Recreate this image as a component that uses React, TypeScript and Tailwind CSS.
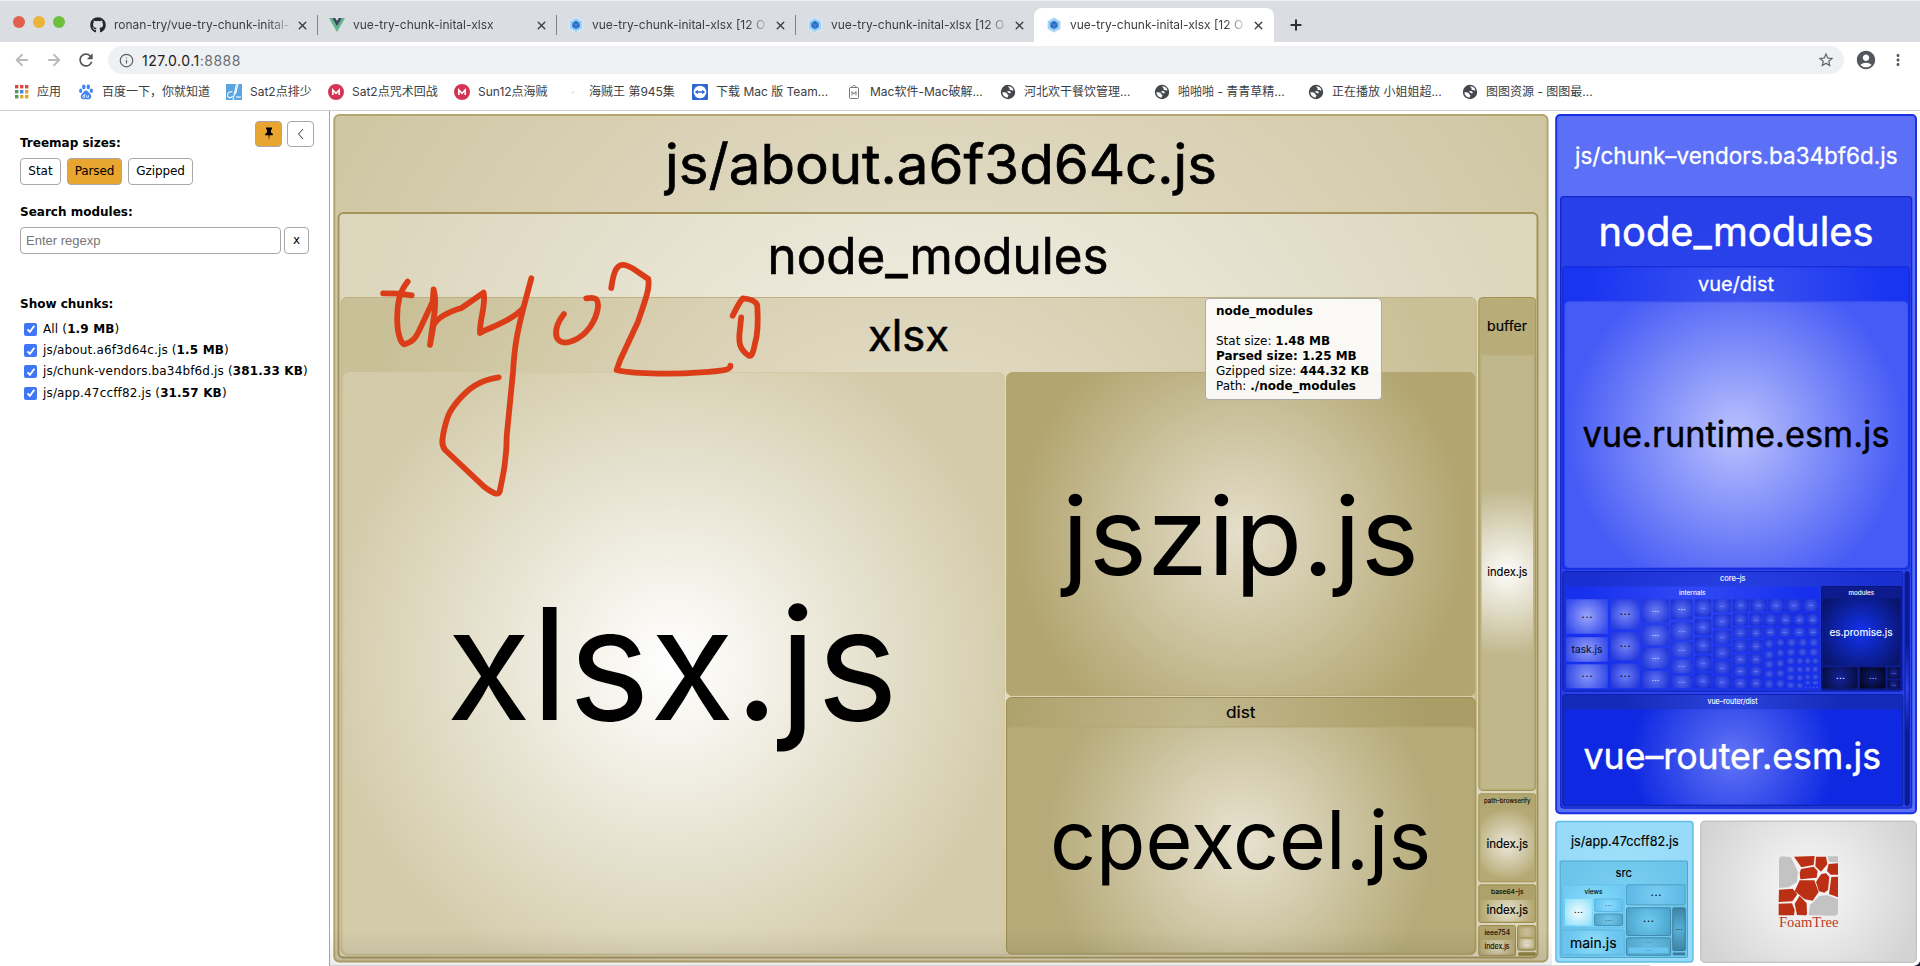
import React from "react";
import { ArrowLeft, ArrowRight, Info, Plus, X } from "lucide-react";
import { FaGithub } from "react-icons/fa";
import { MdAccountCircle, MdMoreVert, MdRefresh, MdStarBorder } from "react-icons/md";

/* ---------- browser chrome ---------- */

function VueLogo() {
  return (
    <svg viewBox="0 0 16 14" className="h-3.5 w-4 shrink-0">
      <path d="M0 0h3.2L8 8.2 12.8 0H16L8 14z" fill="#5fb588" />
      <path d="M3.2 0h3L8 3.1 9.8 0h3L8 8.2z" fill="#35495e" />
    </svg>
  );
}

function WebpackLogo() {
  return (
    <svg viewBox="0 0 16 16" className="h-4 w-4 shrink-0">
      <path d="M8 .4l6.6 3.8v7.6L8 15.6l-6.6-3.8V4.200z" fill="#9fd2f5" stroke="#e6f3fc" strokeWidth=".8" />
      <path d="M8 3.800l3.700 2.100v4.200L8 12.200l-3.700-2.100V5.900z" fill="#2f6cc4" />
      <path d="M4.300 5.900L8 8l3.700-2.100M8 8v4.200" stroke="#6ea6e2" strokeWidth=".5" fill="none" />
    </svg>
  );
}

function Tab({ icon, title, active, separator }: { icon: React.ReactNode; title: string; active?: boolean; separator?: boolean }) {
  return (
    <div className={active ? "flex h-[34px] w-[240px] items-center rounded-t-lg bg-white pl-3 pr-2.5" : "flex h-[34px] w-[239px] items-center pl-3 pr-0"}>
      {icon}
      <div className="ml-2 w-[176px] shrink-0 whitespace-nowrap text-xs text-[#3c4043] [mask-image:linear-gradient(to_right,black_88%,transparent_102%)]">{title}</div>
      <X className="ml-[6px] h-[13px] w-[13px] shrink-0 text-[#3c4043]" strokeWidth={2.6} />
      {separator && <div className="ml-2 h-5 w-px shrink-0 bg-[#808489]" />}
    </div>
  );
}

function AppsIcon() {
  const c = ["#d24a3c", "#d24a3c", "#d24a3c", "#4d9a5b", "#4a7fe6", "#e0a62f", "#4d9a5b", "#e0a62f", "#e0a62f"];
  return (
    <svg viewBox="0 0 14 14" className="h-[14px] w-[14px] shrink-0">
      {c.map((f, i) => (
        <rect key={i} x={(i % 3) * 5} y={Math.floor(i / 3) * 5} width="3.400" height="3.400" fill={f} />
      ))}
    </svg>
  );
}

function BaiduIcon() {
  return (
    <svg viewBox="0 0 16 16" className="h-4 w-4 shrink-0" fill="#4285f4">
      <ellipse cx="5.800" cy="3" rx="1.700" ry="2.400" />
      <ellipse cx="10.300" cy="3" rx="1.700" ry="2.400" />
      <ellipse cx="2.700" cy="6.800" rx="1.600" ry="2.200" />
      <ellipse cx="13.300" cy="6.800" rx="1.600" ry="2.200" />
      <path d="M8 6.500c2 0 2.500 2 4 3.300 2 1.700 1.500 5.400-1 5.400H5c-2.500 0-3-3.700-1-5.400C5.500 8.500 6 6.500 8 6.500z" />
      <path d="M6.800 10v3.400H5.600a1 1 0 010-2h1.200M8.700 11.400v1.500c0 .4.300.5.600.5h1.200v-2" fill="none" stroke="#fff" strokeWidth=".8" />
    </svg>
  );
}

function SatIcon() {
  return (
    <svg viewBox="0 0 16 16" className="h-4 w-4 shrink-0">
      <rect width="16" height="16" fill="#5aa4e0" />
      <path d="M10.500 0L7 16M6.500 8c-3-1-5 1-5 3.500S5 14.500 6.800 12M12 0l-2.500 10" stroke="#fff" strokeWidth="1.100" fill="none" />
      <path d="M10 13h5" stroke="#cfe6f8" strokeWidth="1.500" />
    </svg>
  );
}

function MIcon() {
  return (
    <svg viewBox="0 0 16 16" className="h-4 w-4 shrink-0">
      <circle cx="8" cy="8" r="8" fill="#d43555" />
      <path d="M4.800 11V6L8 9.300 11.200 6v5" stroke="#fff" strokeWidth="1.600" fill="none" />
    </svg>
  );
}

function SpeckIcon() {
  return (
    <svg viewBox="0 0 16 16" className="h-4 w-4 shrink-0">
      <path d="M7.500 9.500l1-2" stroke="#dfb0d8" strokeWidth="1" />
    </svg>
  );
}

function TeamViewerIcon() {
  return (
    <svg viewBox="0 0 16 16" className="h-4 w-4 shrink-0">
      <rect width="16" height="16" rx="1" fill="#2f66d4" />
      <circle cx="8" cy="8" r="6.300" fill="#fff" />
      <path d="M2.800 8l3-2.300v1.500h4.400V5.700l3 2.300-3 2.300V8.800H5.800v1.500z" fill="#2f66d4" />
    </svg>
  );
}

function MacBagIcon() {
  return (
    <svg viewBox="0 0 16 16" className="h-4 w-4 shrink-0" fill="none" stroke="#777">
      <rect x="3.500" y="3.500" width="9" height="11" rx="1" />
      <path d="M6 3.500C6 .8 10 .8 10 3.500" />
      <path d="M6 11.500V7.500l2 2.500 2-2.500v4" />
    </svg>
  );
}

function GlobeIcon() {
  return (
    <svg viewBox="0 0 16 16" className="h-4 w-4 shrink-0">
      <circle cx="8" cy="8" r="7.200" fill="#44474b" />
      <path d="M8.300 2.300c2.400 0 4.600 1.600 5.200 4-.8.700-1.700.1-2.200-.6-.5.600-1.300.5-1.600 0-.5-.9.300-1.300-.4-1.900-.5-.4-1.300-.7-1-1.500z" fill="#fff" />
      <path d="M2.300 8.600c1.400-.5 2.700-.5 4 .2 1 .6.600 1.500 1.500 1.900.9.300.7 1.200.2 1.800-.3.400-.3.900-.8 1.200C4.700 13.300 2.600 11.300 2.300 8.600zM7.500 7.300c1-.6 2.300-.3 3 .5.500.7.200 1.500-.6 1.600-.9 0-1-.7-1.700-.8-.7-.2-1.300-.8-.7-1.300z" fill="#fff" />
    </svg>
  );
}

const bookmarks: { w: string; label: string; icon: React.ReactNode }[] = [
  { w: "w-[63px]", label: "应用", icon: <AppsIcon /> },
  { w: "w-[148px]", label: "百度一下，你就知道", icon: <BaiduIcon /> },
  { w: "w-[102px]", label: "Sat2点排少", icon: <SatIcon /> },
  { w: "w-[126px]", label: "Sat2点咒术回战", icon: <MIcon /> },
  { w: "w-[111px]", label: "Sun12点海贼", icon: <MIcon /> },
  { w: "w-[127px]", label: "海贼王 第945集", icon: <SpeckIcon /> },
  { w: "w-[154px]", label: "下载 Mac 版 Team...", icon: <TeamViewerIcon /> },
  { w: "w-[154px]", label: "Mac软件-Mac破解...", icon: <MacBagIcon /> },
  { w: "w-[154px]", label: "河北欢干餐饮管理...", icon: <GlobeIcon /> },
  { w: "w-[154px]", label: "啪啪啪 - 青青草精...", icon: <GlobeIcon /> },
  { w: "w-[154px]", label: "正在播放 小姐姐超...", icon: <GlobeIcon /> },
  { w: "w-[154px]", label: "图图资源 - 图图最...", icon: <GlobeIcon /> },
];

function BrowserChrome() {
  return (
    <header className="h-[111px] shrink-0 border-b border-[#cfd0d4] bg-white font-['Inter','Noto_Sans_CJK_SC',sans-serif]">
      <div className="flex h-[42px] items-end border-t border-[#eef1f2] bg-[#dadde2]">
        <div className="flex h-[41px] w-[78px] items-center gap-2 pl-[13px]">
          <span className="h-3 w-3 rounded-full bg-[#e0604e]" />
          <span className="h-3 w-3 rounded-full bg-[#edb336]" />
          <span className="h-3 w-3 rounded-full bg-[#6cc03e]" />
        </div>
        <Tab icon={<FaGithub className="h-4 w-4 shrink-0 text-[#24292e]" />} title="ronan-try/vue-try-chunk-inital-" separator />
        <Tab icon={<VueLogo />} title="vue-try-chunk-inital-xlsx" separator />
        <Tab icon={<WebpackLogo />} title="vue-try-chunk-inital-xlsx [12 O" separator />
        <Tab icon={<WebpackLogo />} title="vue-try-chunk-inital-xlsx [12 O" />
        <Tab icon={<WebpackLogo />} title="vue-try-chunk-inital-xlsx [12 O" active />
        <div className="flex h-[34px] items-center pl-3.5">
          <Plus className="h-4 w-4 text-[#2e3033]" strokeWidth={3} />
        </div>
      </div>
      <div className="flex h-9 items-center pl-[13px] pr-[13px]">
        <ArrowLeft className="h-[18px] w-[18px] text-[#b9bbbe]" strokeWidth={2.400} />
        <ArrowRight className="ml-3.5 h-[18px] w-[18px] text-[#b9bbbe]" strokeWidth={2.400} />
        <MdRefresh className="ml-[13px] h-5 w-5 text-[#515459]" />
        <div className="ml-3 flex h-7 flex-1 items-center rounded-full bg-[#eff0f2] pl-[11px] pr-[9px]">
          <Info className="h-[15px] w-[15px] text-[#5f6368]" />
          <span className="ml-2 text-[14px] tracking-[0.5px] text-[#202124]">
            127.0.0.1<span className="text-[#6a6e73]">:8888</span>
          </span>
          <MdStarBorder className="ml-auto h-[18px] w-[18px] text-[#5f6368]" />
        </div>
        <MdAccountCircle className="ml-[11px] h-[22px] w-[22px] text-[#53575c]" />
        <MdMoreVert className="ml-3 h-[18px] w-[18px] text-[#53575c]" />
      </div>
      <div className="flex h-[27px] items-center pl-[15px]">
        {bookmarks.map((b, i) => (
          <div key={i} className={b.w + " flex shrink-0 items-center gap-2 whitespace-nowrap text-xs text-[#3c4043]"}>
            {b.icon}
            <span>{b.label}</span>
          </div>
        ))}
      </div>
    </header>
  );
}

/* ---------- sidebar ---------- */

function Check({ label, size }: { label: string; size: string }) {
  return (
    <div className="flex h-[21.4px] items-center pl-1 whitespace-nowrap tracking-[0.15px]">
      <span className="flex h-[13px] w-[13px] shrink-0 items-center justify-center rounded-[2px] bg-[#3f76f6]">
        <svg viewBox="0 0 12 12" className="h-3 w-3">
          <path d="M2.500 6.300l2.400 2.500 4.500-6" fill="none" stroke="#fff" strokeWidth="1.900" />
        </svg>
      </span>
      <span className="ml-1.5">
        {label} (<b>{size}</b>)
      </span>
    </div>
  );
}

const btn = "flex items-center justify-center rounded-[4px] border border-[#a8a8a8]";

function Sidebar() {
  return (
    <aside className="h-[855px] w-[330px] shrink-0 border-r border-[#a3a3a3] bg-white pl-5 pr-[15px] pt-2.5 text-[12px] leading-[15px] text-black font-['DejaVu_Sans',sans-serif]">
      <div className="flex h-[26px] justify-end gap-[5px]">
        <div className={btn + " h-[26px] w-[27px] bg-[#e8a52f]"}>
          <svg viewBox="0 0 10 14" className="h-3.5 w-2.5">
            <path d="M2 .5h6v1.600L7 3v2.500l1.800 1.300v1.400H5.500L5 13.500l-.5-5.300H1.200V6.800L3 5.500V3l-1-.9z" />
          </svg>
        </div>
        <div className={btn + " h-[26px] w-[27px] bg-white"}>
          <svg viewBox="0 0 8 12" className="h-3 w-2" fill="none" stroke="#222" strokeWidth=".9">
            <path d="M6 1L1.500 6 6 11" />
          </svg>
        </div>
      </div>
      <h2 className="-mt-[11px] font-bold">Treemap sizes:</h2>
      <div className="mt-[7px] flex gap-1.5">
        <div className={btn + " h-[27px] w-[41px]"}>Stat</div>
        <div className={btn + " h-[27px] w-[55px] bg-[#e8a52f] tracking-[-0.1px]"}>Parsed</div>
        <div className={btn + " h-[27px] w-[65px] tracking-[-0.1px]"}>Gzipped</div>
      </div>
      <h2 className="mt-5 font-bold">Search modules:</h2>
      <div className="mt-[7px] flex gap-[3px]">
        <div className="flex h-[27px] w-[261px] items-center rounded-[4px] border border-[#a8a8a8] pl-[5px] text-[13px] text-[#757575] font-['Liberation_Sans',sans-serif]">Enter regexp</div>
        <div className={btn + " h-[27px] w-[25px]"}>x</div>
      </div>
      <h2 className="mt-[43px] font-bold">Show chunks:</h2>
      <div className="mt-[6.5px]">
        <Check label="All" size="1.9 MB" />
        <Check label="js/about.a6f3d64c.js" size="1.5 MB" />
        <Check label="js/chunk-vendors.ba34bf6d.js" size="381.33 KB" />
        <Check label="js/app.47ccff82.js" size="31.57 KB" />
      </div>
    </aside>
  );
}

/* ---------- treemap chart ---------- */

/* Edges of a cell, its fill (rim colour, optional core colour) and outline. */
interface CellProps {
  l: number;
  t: number;
  r: number;
  b: number;
  rim: string;
  core?: string;
  line?: string;
  lw?: number;
  rx?: number;
  gx?: number;
  gy?: number;
  gr?: number;
}

let gradientCount = 0;

function Cell({ l, t, r, b, rim, core, line, lw = 1, rx = 3, gx, gy, gr }: CellProps) {
  const id = React.useMemo(() => "g" + gradientCount++, []);
  const w = r - l;
  const h = b - t;
  return (
    <g>
      {core && (
        <radialGradient id={id} gradientUnits="userSpaceOnUse" cx={gx ?? l + w / 2} cy={gy ?? t + h / 2} r={gr ?? Math.hypot(w, h) * 0.4}>
          <stop offset="0" stopColor={core} />
          <stop offset="1" stopColor={rim} />
        </radialGradient>
      )}
      <rect x={l + lw / 2} y={t + lw / 2} width={w - lw} height={h - lw} rx={rx} fill={core ? `url(#${id})` : rim} stroke={line ?? "none"} strokeWidth={lw} />
    </g>
  );
}

/* Smaller labels get a hairline outline so that they keep their weight. */
function Label({ x1, x2, y, s, c = "#000", children }: { x1: number; x2: number; y: number; s: number; c?: string; children: string }) {
  return (
    <text x={x1} y={y} fontSize={s} fill={c} stroke={c} strokeWidth={s < 60 ? s * 0.013 : 0} textLength={x2 - x1} lengthAdjust="spacingAndGlyphs">
      {children}
    </text>
  );
}

function Dots({ x, y, s = 1, c = "#111" }: { x: number; y: number; s?: number; c?: string }) {
  return (
    <text x={x} y={y + 1} fontSize={s * 10} fontWeight={600} fill={c} textAnchor="middle" textLength={s * 11} lengthAdjust="spacing">
      ...
    </text>
  );
}

/* Small internals modules: left, right, then a list of top/bottom pairs, in thirds of a pixel. */
const columns: [number, number, [number, number][]][] = [
  [62, 190, [[116, 223], [230, 307], [311, 386]]],
  [195, 286, [[116, 210], [215, 303], [309, 386]]],
  [290, 373, [[116, 189], [194, 258], [262, 327], [331, 386]]],
  [376, 445, [[116, 180], [185, 240], [244, 293], [297, 341], [345, 386]]],
  [448, 500, [[116, 171], [176, 227], [231, 281], [286, 334], [338, 386]]],
  [503, 559, [[116, 158], [162, 206], [210, 253], [257, 299], [303, 342], [346, 386]]],
  [562, 610, [[159, 198], [201, 236], [240, 277], [281, 315], [318, 350], [353, 386]]],
  [613, 653, [[159, 198], [201, 236], [240, 277], [281, 315], [318, 350], [353, 386]]],
  [656, 689, [[235, 268], [271, 297], [300, 326], [329, 355], [358, 386]]],
  [692, 720, [[234, 262], [265, 292], [296, 324], [327, 353], [356, 386]]],
  [723, 751, [[291, 314], [317, 340], [343, 362], [365, 386]]],
  [753, 776, [[291, 314], [317, 340], [343, 364], [367, 386]]],
  [778, 798, [[291, 314], [317, 339], [342, 360], [362, 374]]],
  [800, 822, [[291, 314], [317, 339], [342, 360], [362, 374]]],
  [778, 787, [[377, 386]]],
  [789, 798, [[377, 386]]],
  [800, 810, [[377, 386]]],
  [812, 822, [[377, 386]]],
];
const rows: [number, number, [number, number][]][] = [
  [116, 156, [[562, 613], [615, 666], [668, 719], [722, 771], [773, 822]]],
  [159, 198, [[656, 698], [701, 742], [744, 783], [785, 822]]],
  [201, 231, [[656, 696], [699, 740], [742, 784], [786, 822]]],
  [234, 261, [[723, 756], [759, 788], [791, 822]]],
  [264, 289, [[723, 754], [757, 788], [790, 822]]],
];
const modules = [
  ...columns.flatMap(([l, r, list]) => list.map(([t, b]) => [l, t, r, b])),
  ...rows.flatMap(([t, b, list]) => list.map(([l, r]) => [l, t, r, b])),
].map((q) => [1545 + q[0] / 3, 560 + q[1] / 3, 1545 + q[2] / 3, 560 + q[3] / 3]);

function mix(a: number[], b: number[], k: number) {
  return "rgb(" + a.map((v, i) => Math.round(v + (b[i] - v) * k)).join(",") + ")";
}

function Internals() {
  return (
    <g>
      {modules.map(([l, t, r, b], i) => {
        const k = Math.sqrt(Math.min(1, Math.max(0, (l - 1565 + (b - 598) * 0.4) / 170)));
        const small = r - l < 12;
        const isTask = i === 1;
        return (
          <g key={i}>
            <Cell l={l} t={t} r={r} b={b} rx={1} rim={mix([66, 88, 250], [22, 42, 205], k)} core={mix([190, 197, 255], [72, 94, 240], k)} gr={Math.max(r - l, b - t) * 0.55} />
            {isTask && <Label x1={1571.500} x2={1602.500} y={652.700} s={10} c="#0a1040">task.js</Label>}
            {!small && !isTask && <Dots x={(l + r) / 2} y={(t + b) / 2} s={i < 6 ? 1 : i < 15 ? 0.7 : 0.45} c={i < 6 ? "#0a1040" : i < 11 ? "#dfe4ff" : "#9fabf8"} />}
          </g>
        );
      })}
    </g>
  );
}

function AboutChunk() {
  return (
    <g>
      <Cell l={333.300} t={114} r={1548.500} b={962.500} rx={5} lw={2} rim="#cfc6a3" core="#ebe7d8" line="#b3a56c" gx={941} gy={500} gr={700} />
      <Label x1={665} x2={1217} y={184.300} s={55.500}>js/about.a6f3d64c.js</Label>
      <Cell l={337.500} t={212} r={1538.500} b={958.500} rx={5} lw={2} rim="#dcd6bd" core="#f7f5ee" line="#a5935a" gx={937} gy={520} gr={620} />
      <Label x1={767.500} x2={1108.500} y={274.300} s={51}>node_modules</Label>
      <Cell l={340.500} t={297} r={1476.700} b={955.500} rx={6} rim="#cac098" core="#ebe6d6" line="#bdb182" gx={908} gy={560} gr={560} />
      <Label x1={868} x2={949} y={351} s={43.500}>xlsx</Label>
      <Cell l={342.500} t={372} r={1005} b={954} rx={6} rim="#d3cbaa" core="#ffffff" line="#d3caa6" gx={672} gy={663} gr={345} />
      <Label x1={446.500} x2={898} y={720} s={155}>xlsx.js</Label>
      <Cell l={1006} t={372} r={1475.500} b={696.300} rx={6} rim="#b2a570" core="#e5dfcb" line="#b3a672" gx={1241} gy={534} gr={225} />
      <Label x1={1062} x2={1419} y={575} s={108}>jszip.js</Label>
      <path d="M1006 696.600H1475" stroke="#ded8bf" strokeWidth=".8" />
      <Cell l={1006} t={697} r={1475.700} b={954.500} rx={5} rim="#aa9d66" core="#c2b88e" line="#9d8f53" gx={1200} gy={725} gr={230} />
      <Label x1={1226} x2={1255.500} y={717.900} s={16}>dist</Label>
      <Cell l={1007} t={726.500} r={1474.700} b={953.500} rx={4} rim="#b5aa78" core="#e8e3d1" line="#b3a774" gx={1241} gy={840} gr={195} />
      <Label x1={1050} x2={1431} y={868.700} s={81}>cpexcel.js</Label>

      <Cell l={1478.300} t={297} r={1536.200} b={791} rx={4} rim="#b8ac79" line="#a39453" />
      <Label x1={1487} x2={1527} y={331.300} s={13}>buffer</Label>
      <Cell l={1480.500} t={354.500} r={1534.200} b={789.500} rx={2} rim="#c0b78c" core="#fdfcfa" line="#bbb080" gx={1507} gy={572} gr={84} />
      <Label x1={1487.300} x2={1527.500} y={576} s={12}>index.js</Label>

      <Cell l={1478.300} t={793.300} r={1536.200} b={882.300} rx={2} rim="#b3a771" line="#a39453" />
      <Label x1={1484} x2={1530.500} y={803} s={6.800}>path–browserify</Label>
      <Cell l={1480} t={808} r={1534.500} b={881} rx={1} rim="#b5aa75" core="#ece8da" gr={36} />
      <Label x1={1486.500} x2={1528} y={847.500} s={12.500}>index.js</Label>

      <Cell l={1478.300} t={884.300} r={1536.200} b={923} rx={2} rim="#aea16a" line="#9c8e50" />
      <Label x1={1491} x2={1523.500} y={893.700} s={6.800}>base64–js</Label>
      <Cell l={1480} t={899.500} r={1534.500} b={922} rx={1} rim="#b5aa75" core="#e6e1ce" gr={26} />
      <Label x1={1486.500} x2={1528} y={913.500} s={12.500}>index.js</Label>

      <Cell l={1478.300} t={925} r={1516} b={956.300} rx={2} rim="#b0a36c" line="#9c8e50" />
      <Label x1={1484.500} x2={1510} y={935} s={7.200}>ieee754</Label>
      <Cell l={1480} t={939.500} r={1514.500} b={955} rx={1} rim="#b5aa75" core="#ddd7be" gr={17} />
      <Label x1={1484.500} x2={1509.500} y={949} s={7.500}>index.js</Label>

      <Cell l={1517} t={925} r={1536.200} b={950.700} rx={2} rim="#b0a36c" line="#9c8e50" />
      <Cell l={1519} t={927} r={1534.500} b={937.500} rx={1} rim="#b0a36c" core="#cfc7a4" gr={9} />
      <Cell l={1519} t={938.500} r={1534.500} b={949} rx={1} rim="#b8ad79" core="#f0ecdf" gr={9} />
      <Dots x={1526.700} y={932} s={0.4} c="#7a6f45" />
      <Dots x={1526.700} y={943} s={0.4} c="#7a6f45" />
      <Cell l={1518} t={952} r={1536.200} b={956.300} rx={1} rim="#8f8249" line="#a39453" />
    </g>
  );
}

function VendorsChunk() {
  return (
    <g>
      <Cell l={1555.200} t={114} r={1917} b={814.300} rx={4} lw={2} rim="#5b6ff7" line="#1930e2" />
      <Label x1={1575} x2={1897.500} y={164.300} s={22.500} c="#fff">js/chunk–vendors.ba34bf6d.js</Label>
      <Cell l={1560} t={196} r={1912.300} b={808.700} rx={3} lw={1.300} rim="#2740ea" core="#2f49f0" line="#1227c6" />
      <Label x1={1598.500} x2={1873.500} y={246} s={40.500} c="#fff">node_modules</Label>
      <Cell l={1562.300} t={266.300} r={1909.700} b={569.500} rx={3} rim="#1a35f2" core="#3e55ee" line="#1127d2" gx={1736} gy={310} gr={150} />
      <Label x1={1698} x2={1774} y={291} s={19.500} c="#fff">vue/dist</Label>
      <Cell l={1564.500} t={301.300} r={1908} b={568} rx={4} rim="#465bf5" core="#bbc2fd" line="#3f54ee" gx={1736} gy={434} gr={168} />
      <Label x1={1582.500} x2={1889.500} y={446.700} s={35.500}>vue.runtime.esm.js</Label>

      <Cell l={1562.300} t={571} r={1903.300} b={691.700} rx={2} rim="#1a2fd0" core="#2b43e6" line="#0d20b4" gr={150} />
      <Label x1={1720} x2={1745.500} y={581} s={7.600} c="#fff">core–js</Label>
      <Cell l={1564.500} t={586} r={1820.500} b={690} rx={1} rim="#1730ee" core="#3149f4" gx={1693} gy={592} gr={110} />
      <Label x1={1679} x2={1705.500} y={595} s={6.400} c="#fff">internals</Label>
      <Internals />
      <Cell l={1821} t={586} r={1901.700} b={690.500} rx={1} rim="#0e1b8c" line="#0a1676" />
      <Label x1={1848.500} x2={1874} y={595} s={6.400} c="#fff">modules</Label>
      <Cell l={1822} t={598} r={1900.500} b={665.700} rx={1} rim="#08156b" core="#1332ee" gr={46} />
      <Label x1={1829.500} x2={1892.500} y={635.700} s={10} c="#fff">es.promise.js</Label>
      <Cell l={1822} t={666.700} r={1858} b={689} rx={1} rim="#060d3e" core="#15239a" gr={19} />
      <Cell l={1859.300} t={666.700} r={1886} b={689} rx={1} rim="#03061f" core="#0e1a74" gr={15} />
      <Cell l={1887} t={666.700} r={1900.500} b={679} rx={1} rim="#060b38" core="#16249c" gr={8} />
      <Cell l={1887} t={680} r={1900.500} b={689} rx={1} rim="#060b38" core="#16249c" gr={7} />
      <Dots x={1840.500} y={677.500} s={0.8} c="#e8ebff" />
      <Dots x={1873} y={677.500} s={0.7} c="#b9c0ee" />
      <Dots x={1893.700} y={672.500} s={0.45} c="#8a94d8" />
      <Dots x={1893.700} y={684.500} s={0.45} c="#8a94d8" />

      <Cell l={1904.500} t={571} r={1909.700} b={806} rx={2} rim="#0b1c92" core="#2a45ee" line="#0b1b98" gr={45} />

      <Cell l={1562.300} t={694} r={1903.300} b={806.300} rx={2} rim="#152ab8" core="#2c44de" line="#0d20b0" gx={1732} gy={705} gr={110} />
      <Label x1={1707.500} x2={1757.500} y={704} s={7.500} c="#fff">vue–router/dist</Label>
      <Cell l={1564} t={708.700} r={1901.500} b={805} rx={2} rim="#0f29e2" core="#6275f5" gx={1733} gy={757} gr={102} />
      <Label x1={1583.500} x2={1881} y={769} s={36} c="#fff">vue–router.esm.js</Label>
    </g>
  );
}

function AppChunk() {
  return (
    <g>
      <Cell l={1555.200} t={820.700} r={1693.700} b={962.700} rx={3} lw={1.500} rim="#96daf8" core="#a3e2fb" line="#62bde4" />
      <Label x1={1571} x2={1678.700} y={846.300} s={13}>js/app.47ccff82.js</Label>
      <Cell l={1559.700} t={860.500} r={1688} b={958} rx={1} rim="#6bc4ea" core="#7fd3f4" line="#4fa6cb" />
      <Label x1={1615.500} x2={1632} y={877} s={11}>src</Label>
      <Cell l={1561.700} t={884.300} r={1624.700} b={928.300} rx={1} rim="#70cbf3" core="#8addfb" line="#66bfe8" />
      <Label x1={1584.500} x2={1602.500} y={894} s={6.800}>views</Label>
      <Cell l={1564.500} t={898.500} r={1592.300} b={926} rx={1} rim="#8edffb" core="#f2fcff" gr={18} />
      <Cell l={1594} t={898.500} r={1623} b={912} rx={1} rim="#62c2f0" core="#8bdcfa" line="#5bb8e4" gr={14} />
      <Cell l={1594} t={913.500} r={1623} b={926} rx={1} rim="#52a5c9" core="#72c8ec" line="#4796ba" gr={14} />
      <Cell l={1561.700} t={929.500} r={1624.700} b={955.300} rx={1} rim="#69c4ef" core="#8eddf9" line="#5bb4dc" gr={26} />
      <Label x1={1570} x2={1616.500} y={948} s={13.500}>main.js</Label>
      <Cell l={1626} t={884.300} r={1685.500} b={905.300} rx={1} rim="#5fbbe6" core="#79cdf1" line="#509fc3" gr={26} />
      <Cell l={1626} t={907.300} r={1671} b={936} rx={1} rim="#4aa3cb" core="#70cbf1" line="#408caf" gr={24} />
      <Cell l={1672.300} t={907.300} r={1685.700} b={951} rx={1} rim="#3f86a6" core="#58b2da" line="#39799a" gr={20} />
      <Cell l={1626} t={937.300} r={1671} b={955.700} rx={1} rim="#55a9cc" core="#66bde2" line="#3f89aa" />
      <Cell l={1628} t={947} r={1669} b={953.500} rx={1} rim="#6ac6f0" />
      <Cell l={1672.300} t={952} r={1685.700} b={955.700} rx={1} rim="#3c7c9b" />
      <Dots x={1578.500} y={911.500} s={0.8} />
      <Dots x={1608.500} y={905} s={0.6} c="#1d5670" />
      <Dots x={1608.500} y={919.500} s={0.6} c="#1d5670" />
      <Dots x={1656} y={894.500} />
      <Dots x={1648.500} y={921} />
      <Dots x={1679} y={928.500} s={0.6} />
      <Dots x={1648.500} y={942} s={0.5} c="#1d5670" />
      <Dots x={1648.500} y={950} s={0.5} c="#1d5670" />
    </g>
  );
}

function FoamTreeCard() {
  return (
    <g>
      <Cell l={1700} t={820.500} r={1917} b={963} rx={4} lw={1.500} rim="#d3d3d3" core="#fafafa" line="#c6c6c6" gx={1808} gy={888} gr={118} />
      <g transform="translate(1545 690) scale(.33333)">
        <g fill="#c3c3c3">
          <path d="M712 499L738 502 759 545 756 577 731 592 702 594V509Q703 500 712 499zM848 499H879V517L852 515zM823 618L846 615 879 628V666Q879 677 868 677L791 676 795 645z" />
        </g>
        <g fill="#bb2f15">
          <path d="M747 500L809 498 806 525 769 532z" />
          <path d="M768 537L806 530 818 543 815 563 766 568 764 549z" />
          <path d="M813 500H843L847 523 828 545 811 529z" />
          <path d="M851 522L879 520V554L857 554 846 543z" />
          <path d="M819 566L829 552 843 550 853 561 849 600 838 608 822 604 813 576z" />
          <path d="M859 561L879 560V622L852 612z" />
          <path d="M764 571L808 571 821 606 803 632 779 628 749 603z" />
          <path d="M702 599L743 596 757 613 742 634 701 636z" />
          <path d="M701 641L741 640 749 660 747 676 701 676z" />
          <path d="M764 617L785 640 786 672Q785 677 779 676L756 675 749 641z" />
        </g>
      </g>
      <text x="1779" y="927.200" fontSize="14.500" fill="#bb3a24" textLength="59.500" lengthAdjust="spacingAndGlyphs" className="font-['Liberation_Serif',serif]">
        FoamTree
      </text>
    </g>
  );
}

/* Freehand marker strokes; the group is stretched, the pen width is not. */
function Handwriting() {
  const strokes = [
    "M174 530C165 545 158 565 155 580C148 620 150 650 152 675C155 695 158 712 166 718C185 712 192 700 202 670L230 590L232 553C238 580 236 615 231 650L224 720L232 660C240 640 262 622 295 609L344 563C350 600 335 640 336 684C350 670 400 655 431 612",
    "M119 565L155 566L183 571",
    "M451 520L432 615C418 690 413 730 410 800L396 990C396 1060 388 1110 380 1160C376 1172 365 1165 345 1145L258 1035C248 1020 252 1000 254 985C262 930 270 915 285 890C310 850 335 825 378 817",
    "M524 627C505 660 505 685 508 698C515 715 530 716 545 707C575 690 595 650 600 610C602 580 595 575 574 580",
    "M630 549C633 520 637 500 642 490C652 475 660 478 678 490L713 522C717 550 705 590 690 650L650 765L642 795C670 805 760 810 830 802C880 798 898 795 897 782",
    "M902 632C910 610 918 590 925 580C945 582 953 588 957 600C959 640 960 680 952 715C948 745 944 755 938 752C918 735 916 715 917 690L921 637",
  ];
  return (
    <g transform="translate(330 105) scale(.44643 .33333)" fill="none" stroke="#db3d19" strokeWidth="5.800" strokeLinecap="round" strokeLinejoin="round">
      {strokes.map((d) => (
        <path key={d} d={d} vectorEffect="non-scaling-stroke" />
      ))}
    </g>
  );
}

function Treemap() {
  return (
    <svg viewBox="330 111 1590 855" className="block h-[855px] w-[1590px] font-['Inter',sans-serif]">
      <AboutChunk />
      <VendorsChunk />
      <AppChunk />
      <FoamTreeCard />
      <Handwriting />
      <linearGradient id="floor" x1="0" y1="0" x2="0" y2="1">
        <stop offset="0" stopColor="#000" stopOpacity="0" />
        <stop offset="1" stopColor="#000" stopOpacity=".08" />
      </linearGradient>
      <rect x="330" y="930" width="1222" height="36" fill="url(#floor)" />
      <path d="M330 965.500H1650" stroke="#d4d4d4" />
      <path d="M1920 961v5h-6q5-1 6-5z" fill="#1a1d33" />
    </svg>
  );
}

function Tooltip() {
  return (
    <div className="absolute left-[875px] top-[187px] h-[102px] w-[177px] whitespace-nowrap rounded-[4px] border border-[#aaa] bg-white/90 pl-2.5 pt-[5px] text-[12px] leading-[15px] text-black font-['DejaVu_Sans',sans-serif]">
      <div className="mb-[15px] font-bold">node_modules</div>
      <div>Stat size: <b>1.48 MB</b></div>
      <div className="font-bold">Parsed size: 1.25 MB</div>
      <div>Gzipped size: <b>444.32 KB</b></div>
      <div>Path: <b>./node_modules</b></div>
    </div>
  );
}

export default function App() {
  return (
    <div className="flex h-[966px] w-[1920px] flex-col overflow-hidden bg-white">
      <BrowserChrome />
      <div className="flex">
        <Sidebar />
        <main className="relative">
          <Treemap />
          <Tooltip />
        </main>
      </div>
    </div>
  );
}
